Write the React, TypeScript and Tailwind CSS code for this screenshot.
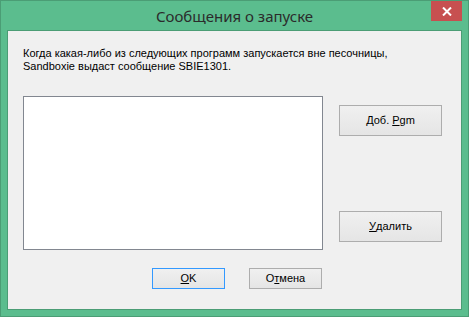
import React from 'react';

const uiFont = { fontFamily: '"Liberation Sans", Arial, sans-serif' };

function WinButton({
  children,
  className = '',
  focused = false,
}: {
  children: React.ReactNode;
  className?: string;
  focused?: boolean;
}) {
  return (
    <button
      className={`flex items-center justify-center border bg-gradient-to-b from-[#f0f0f0] to-[#e5e5e5] text-[11px] text-black ${
        focused ? 'border-[#3399ff]' : 'border-[#adadad]'
      } ${className}`}
      style={uiFont}
    >
      {children}
    </button>
  );
}

export default function App() {
  return (
    <div className="w-[469px] h-[317px] bg-[#5bbd8e] border border-[#4b9d75] flex flex-col">
      {/* Title bar */}
      <div className="relative h-[29px] flex items-center justify-center">
        <span
          className="text-[15px] text-[#2b2b2b] pt-[1px]"
          style={{ fontFamily: '"Noto Sans", "Open Sans", sans-serif' }}
        >
          Сообщения о запуске
        </span>
        <div className="absolute right-[6px] top-0 w-[31px] h-[20px] bg-[#c75050] flex items-center justify-center">
          <svg width="10" height="9" viewBox="0 0 10 9">
            <path d="M1 0.5 L9 8.5 M9 0.5 L1 8.5" stroke="#ffffff" strokeWidth="2" />
          </svg>
        </div>
      </div>

      {/* Client area */}
      <div className="mx-[6px] h-[280px] border border-[#4b9d75] bg-[#f0f0f0] flex flex-col" style={uiFont}>
        <p className="ml-[15px] mt-[16px] text-[11px] leading-[13px] text-black">
          Когда какая-либо из следующих программ запускается вне песочницы,
          <br />
          Sandboxie выдаст сообщение SBIE1301.
        </p>

        <div className="flex mt-[23px] ml-[15px]">
          <div className="w-[300px] h-[154px] bg-white border border-[#828790]" />
          <div className="ml-[16px] flex flex-col pt-[9px]">
            <WinButton className="w-[103px] h-[31px]">
              Доб. <span className="underline ml-[3px]">P</span>gm
            </WinButton>
            <WinButton className="w-[103px] h-[31px] mt-[75px]">
              <span className="underline">У</span>далить
            </WinButton>
          </div>
        </div>

        <div className="flex mt-[18px] ml-[144px]">
          <WinButton className="w-[73px] h-[21px]" focused>
            <span className="underline">O</span>K
          </WinButton>
          <WinButton className="w-[73px] h-[21px] ml-[24px]">
            О<span className="underline">т</span>мена
          </WinButton>
        </div>
      </div>
    </div>
  );
}
